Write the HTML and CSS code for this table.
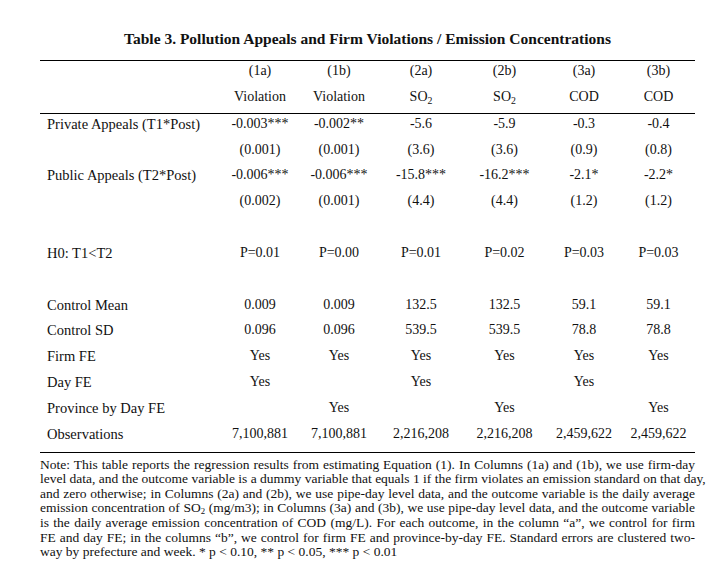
FILE: index.html
```html
<!DOCTYPE html>
<html>
<head>
<meta charset="utf-8">
<link rel="stylesheet" href="styles.css">
</head>
<body>
<div class="page">
  <h1 class="title">Table 3. Pollution Appeals and Firm Violations / Emission Concentrations</h1>
  <table class="results">
    <colgroup>
      <col class="c-label"><col class="c1"><col class="c2"><col class="c3"><col class="c4"><col class="c5"><col class="c6">
    </colgroup>
    <thead>
      <tr><th></th><th>(1a)</th><th>(1b)</th><th>(2a)</th><th>(2b)</th><th>(3a)</th><th>(3b)</th></tr>
      <tr><th></th><th>Violation</th><th>Violation</th><th>SO<sub>2</sub></th><th>SO<sub>2</sub></th><th>COD</th><th>COD</th></tr>
    </thead>
    <tbody>
      <tr><td class="label">Private Appeals (T1*Post)</td><td>-0.003***</td><td>-0.002**</td><td>-5.6</td><td>-5.9</td><td>-0.3</td><td>-0.4</td></tr>
      <tr><td class="label"></td><td>(0.001)</td><td>(0.001)</td><td>(3.6)</td><td>(3.6)</td><td>(0.9)</td><td>(0.8)</td></tr>
      <tr><td class="label">Public Appeals (T2*Post)</td><td>-0.006***</td><td>-0.006***</td><td>-15.8***</td><td>-16.2***</td><td>-2.1*</td><td>-2.2*</td></tr>
      <tr><td class="label"></td><td>(0.002)</td><td>(0.001)</td><td>(4.4)</td><td>(4.4)</td><td>(1.2)</td><td>(1.2)</td></tr>
      <tr><td class="label"></td><td></td><td></td><td></td><td></td><td></td><td></td></tr>
      <tr><td class="label">H0: T1&lt;T2</td><td>P=0.01</td><td>P=0.00</td><td>P=0.01</td><td>P=0.02</td><td>P=0.03</td><td>P=0.03</td></tr>
      <tr><td class="label"></td><td></td><td></td><td></td><td></td><td></td><td></td></tr>
      <tr><td class="label">Control Mean</td><td>0.009</td><td>0.009</td><td>132.5</td><td>132.5</td><td>59.1</td><td>59.1</td></tr>
      <tr><td class="label">Control SD</td><td>0.096</td><td>0.096</td><td>539.5</td><td>539.5</td><td>78.8</td><td>78.8</td></tr>
      <tr><td class="label">Firm FE</td><td>Yes</td><td>Yes</td><td>Yes</td><td>Yes</td><td>Yes</td><td>Yes</td></tr>
      <tr><td class="label">Day FE</td><td>Yes</td><td></td><td>Yes</td><td></td><td>Yes</td><td></td></tr>
      <tr><td class="label">Province by Day FE</td><td></td><td>Yes</td><td></td><td>Yes</td><td></td><td>Yes</td></tr>
      <tr><td class="label">Observations</td><td>7,100,881</td><td>7,100,881</td><td>2,216,208</td><td>2,216,208</td><td>2,459,622</td><td>2,459,622</td></tr>
    </tbody>
  </table>
  <div class="note">
    <span class="line">Note: This table reports the regression results from estimating Equation (1). In Columns (1a) and (1b), we use firm-day</span>
    <span class="line">level data, and the outcome variable is a dummy variable that equals 1 if the firm violates an emission standard on that day,</span>
    <span class="line">and zero otherwise; in Columns (2a) and (2b), we use pipe-day level data, and the outcome variable is the daily average</span>
    <span class="line">emission concentration of SO<sub class="nsub">2</sub> (mg/m3); in Columns (3a) and (3b), we use pipe-day level data, and the outcome variable</span>
    <span class="line">is the daily average emission concentration of COD (mg/L). For each outcome, in the column “a”, we control for firm</span>
    <span class="line">FE and day FE; in the columns “b”, we control for firm FE and province-by-day FE. Standard errors are clustered two-</span>
    <span class="line last">way by prefecture and week. * p &lt; 0.10, ** p &lt; 0.05, *** p &lt; 0.01</span>
  </div>
</div>
</body>
</html>
```
FILE: styles.css
```css
html, body {
  margin: 0;
  padding: 0;
  background: #fff;
}
body {
  font-family: "Liberation Serif", "Times New Roman", serif;
  color: #111;
}
.page {
  width: 655px;
  padding: 28px 0 0 40px;
}
.title {
  margin: 0 0 11px;
  font-size: 15.5px;
  line-height: 21px;
  font-weight: bold;
  text-align: center;
}
.results {
  width: 655px;
  border-collapse: collapse;
  table-layout: fixed;
  font-size: 14px;
}
.c-label { width: 181px; }
.c1 { width: 78px; }
.c2 { width: 80px; }
.c3 { width: 84px; }
.c4 { width: 83px; }
.c5 { width: 76px; }
.c6 { width: 73px; }
.results thead {
  border-top: 1px solid #000;
}
.results tbody {
  border-top: 1px solid #000;
}
.results th,
.results td {
  padding: 0 0 5.85px;
  line-height: 20px;
  height: 20px;
  font-weight: normal;
  text-align: center;
  white-space: nowrap;
  vertical-align: top;
}
.results td.label {
  text-align: left;
  padding-left: 7px;
  font-size: 14.5px;
}
sub {
  font-size: 0.7em;
  line-height: 0;
  vertical-align: -0.3em;
}
.note {
  margin-top: 2px;
  border-top: 1px solid #000;
  padding-top: 5px;
  font-size: 13.5px;
  line-height: 14.6px;
}
.note .nsub {
  font-size: 0.65em;
  vertical-align: -0.2em;
}
.note .line {
  display: block;
  white-space: nowrap;
  text-align: justify;
  text-align-last: justify;
}
.note .line.last {
  text-align-last: left;
}
```
